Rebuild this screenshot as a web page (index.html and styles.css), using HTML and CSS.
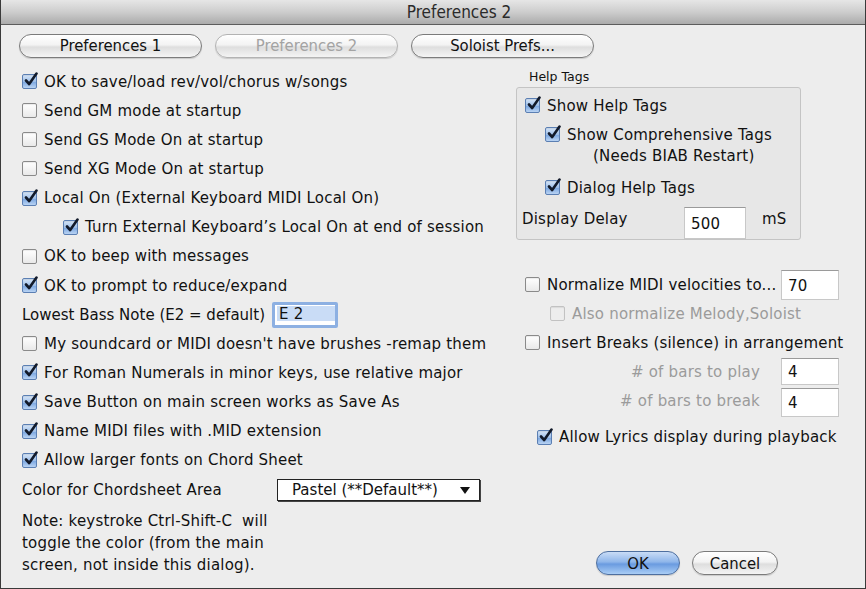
FILE: index.html
```html
<!DOCTYPE html>
<html>
<head>
<meta charset="utf-8">
<link rel="stylesheet" href="styles.css">
</head>
<body>
<div class="window">
  <div class="titlebar">Preferences 2</div>
  <div class="tabs">
    <div class="pill tab">Preferences 1</div>
    <div class="pill tab disabled">Preferences 2</div>
    <div class="pill tab solo">Soloist Prefs...</div>
  </div>
  <div class="main">
    <div class="left">
      <div class="row"><span class="cb on"></span>OK to save/load rev/vol/chorus w/songs</div>
      <div class="row"><span class="cb"></span>Send GM mode at startup</div>
      <div class="row"><span class="cb"></span>Send GS Mode On at startup</div>
      <div class="row"><span class="cb"></span>Send XG Mode On at startup</div>
      <div class="row"><span class="cb on"></span>Local On (External Keyboard MIDI Local On)</div>
      <div class="row indent"><span class="cb on"></span>Turn External Keyboard’s Local On at end of session</div>
      <div class="row"><span class="cb"></span>OK to beep with messages</div>
      <div class="row"><span class="cb on"></span>OK to prompt to reduce/expand</div>
      <div class="row plain"><span class="lbl bass">Lowest Bass Note (E2 = default)</span><span class="field focus"><span class="sel">E 2</span></span></div>
      <div class="row"><span class="cb"></span>My soundcard or MIDI doesn't have brushes -remap them</div>
      <div class="row"><span class="cb on"></span>For Roman Numerals in minor keys, use relative major</div>
      <div class="row"><span class="cb on"></span>Save Button on main screen works as Save As</div>
      <div class="row"><span class="cb on"></span>Name MIDI files with .MID extension</div>
      <div class="row"><span class="cb on"></span>Allow larger fonts on Chord Sheet</div>
      <div class="row plain"><span class="lbl color">Color for Chordsheet Area</span><span class="select">Pastel (**Default**)<span class="arrow"></span></span></div>
      <div class="note">Note: keystroke Ctrl-Shift-C&nbsp; will<br>toggle the color (from the main<br>screen, not inside this dialog).</div>
    </div>
    <div class="right">
      <div class="grouplabel">Help Tags</div>
      <div class="group">
        <div class="grow"><span class="cb on"></span>Show Help Tags</div>
        <div class="grow sub"><span class="cb on"></span>Show Comprehensive Tags</div>
        <div class="needs">(Needs BIAB Restart)</div>
        <div class="grow sub dialog"><span class="cb on"></span>Dialog Help Tags</div>
        <div class="delay"><span class="dlabel">Display Delay</span><span class="field dfield">500</span><span class="ms">mS</span></div>
      </div>
      <div class="rrows">
        <div class="row"><span class="cb"></span>Normalize MIDI velocities to...<span class="field nfield">70</span></div>
        <div class="row dim indent2"><span class="cb off"></span>Also normalize Melody,Soloist</div>
        <div class="row"><span class="cb"></span>Insert Breaks (silence) in arrangement</div>
        <div class="row dim bars"><span class="blabel">#&nbsp;of bars to play</span><span class="field bfield">4</span></div>
        <div class="row dim bars"><span class="blabel">#&nbsp;of bars to break</span><span class="field bfield b2">4</span></div>
        <div class="row lyrics"><span class="cb on"></span>Allow Lyrics display during playback</div>
      </div>
      <div class="buttons">
        <div class="pill ok">OK</div>
        <div class="pill cancel">Cancel</div>
      </div>
    </div>
  </div>
</div>
</body>
</html>
```
FILE: styles.css
```css
html, body {
  margin: 0;
  padding: 0;
  background: #ededed;
}
.window {
  width: 866px;
  height: 589px;
  box-sizing: border-box;
  border: 1px solid #3a3a3a;
  border-top: none;
  background: #ededed;
  font-family: "DejaVu Sans", sans-serif;
  font-size: 15px;
  letter-spacing: 0.2px;
  color: #111;
  overflow: hidden;
}
.titlebar {
  height: 24px;
  line-height: 24px;
  text-align: center;
  padding-left: 52px;
  font-family: "DejaVu Sans Condensed", "DejaVu Sans", sans-serif;
  font-size: 17px;
  letter-spacing: 0;
  color: #2a2a2a;
  background: linear-gradient(#e6e6e6, #cdcdcd 50%, #ababab);
  border-bottom: 1px solid #5c5c5c;
}
.tabs {
  display: flex;
  gap: 13px;
  padding: 9px 0 1px 18px;
}
.pill {
  box-sizing: border-box;
  height: 25px;
  line-height: 23px;
  text-align: center;
  border: 1px solid #7b7b7b;
  border-radius: 13px;
  background: linear-gradient(#ffffff, #f3f3f3 45%, #dedede 55%, #f4f4f4);
  box-shadow: 0 1px 1px rgba(0,0,0,0.15);
  font-family: "DejaVu Sans Condensed", "DejaVu Sans", sans-serif;
  font-size: 16.5px;
  letter-spacing: 0;
  color: #111;
}
.tab { width: 183px; height: 24px; line-height: 22px; }
.tab.disabled { color: #a3a3a3; border-color: #b3b3b3; }
.main {
  display: flex;
  padding-top: 8px;
}
.left {
  width: 494px;
  padding-left: 21px;
  display: flex;
  flex-direction: column;
}
.row {
  height: 29.15px;
  display: flex;
  align-items: center;
  white-space: nowrap;
}
.row.indent { padding-left: 41px; }
.lbl.bass { width: 250px; letter-spacing: 0; }
.lbl.color { width: 255px; }
.cb {
  box-sizing: border-box;
  width: 15px;
  height: 15px;
  margin-right: 7px;
  border: 1px solid #8a8a8a;
  border-radius: 2px;
  background: linear-gradient(#ffffff, #e9e9e9);
  box-shadow: inset 0 1px 1px rgba(0,0,0,0.08);
  flex: none;
  position: relative;
}
.cb.on {
  border-color: #5b7fb3;
  background: linear-gradient(#d7e6f8, #9fc0ea 50%, #7ea9e2 55%, #b9d3f3);
}
.cb.on::after {
  content: "";
  position: absolute;
  left: 1px;
  top: -3px;
  width: 14px;
  height: 15px;
  background: url("data:image/svg+xml;utf8,<svg xmlns='http://www.w3.org/2000/svg' width='14' height='15' viewBox='0 0 14 15'><path d='M2 8.5 L5.2 12 L12.5 1.5' fill='none' stroke='%23121a2a' stroke-width='2.6' stroke-linecap='round' stroke-linejoin='round'/></svg>") no-repeat;
}
.cb.off { border-color: #c2c2c2; background: #ededed; }
.field {
  box-sizing: border-box;
  display: inline-block;
  background: #fff;
  border: 1px solid #c8c8c8;
  border-top-color: #9a9a9a;
  padding-left: 6px;
  color: #111;
}
.field.focus {
  width: 66px;
  height: 26px;
  border: 3px solid #8db0e2;
  border-radius: 2px;
  padding: 1px 0 0 2px;
  line-height: 18px;
  background: #fff;
}
.sel {
  display: block;
  background: #c9dcf6;
  width: 56px;
  height: 15px;
  line-height: 17px;
  padding-left: 2px;
}
.select {
  box-sizing: border-box;
  width: 203px;
  height: 22px;
  line-height: 20px;
  border: 1px solid #222;
  box-shadow: 1px 1px 0 #444;
  background: #fff;
  padding-left: 14px;
  position: relative;
  letter-spacing: 0;
}
.arrow {
  position: absolute;
  right: 9px;
  top: 7px;
  border-left: 5px solid transparent;
  border-right: 5px solid transparent;
  border-top: 7px solid #111;
}
.note {
  margin-top: 6px;
  line-height: 22px;
}
.right {
  flex: 1;
  display: flex;
  flex-direction: column;
}
.grouplabel {
  font-size: 12.5px;
  letter-spacing: 0;
  height: 20px;
  line-height: 20px;
  padding-left: 13px;
  color: #111;
}
.group {
  box-sizing: border-box;
  width: 285px;
  height: 153px;
  border: 1px solid #c4c4c4;
  border-radius: 3px;
  background: #e7e7e7;
  padding: 10px 0 0 8px;
}
.grow {
  height: 15px;
  display: flex;
  align-items: center;
  white-space: nowrap;
}
.grow.sub { padding-left: 20px; margin-top: 14px; }
.needs { padding-left: 68px; height: 22px; line-height: 22px; margin-top: 3px; }
.grow.dialog { margin-top: 13px; }
.delay {
  display: flex;
  align-items: flex-start;
  margin-top: 12px;
  margin-left: -3px;
  height: 32px;
}
.dlabel { width: 162px; margin-top: 3px; }
.dfield { width: 62px; height: 32px; line-height: 32px; padding-left: 6px; }
.ms { margin-left: 16px; margin-top: 3px; }
.rrows {
  margin-top: 30px;
  padding-left: 9px;
}
.rrows .row { position: relative; }
.nfield, .bfield {
  position: absolute;
  left: 256px;
  width: 58px;
  height: 30px;
  line-height: 30px;
}
.nfield { top: 0; }
.bfield { top: 1px; height: 27px; line-height: 27px; }
.bfield.b2 { top: 1px; height: 29px; line-height: 29px; }
.dim { color: #9b9b9b; }
.indent2 { padding-left: 25px; }
.bars { justify-content: flex-end; width: 235px; }
.lyrics { padding-left: 12px; margin-top: 7px; }
.buttons {
  display: flex;
  gap: 12px;
  margin-top: 99px;
  padding-left: 80px;
}
.ok {
  width: 84px;
  height: 24px;
  border-color: #4e6f9f;
  background: linear-gradient(#c9dcf6, #8fb6ea 45%, #6a9be0 55%, #a9cdf5);
}
.cancel { width: 86px; height: 24px; }
```
